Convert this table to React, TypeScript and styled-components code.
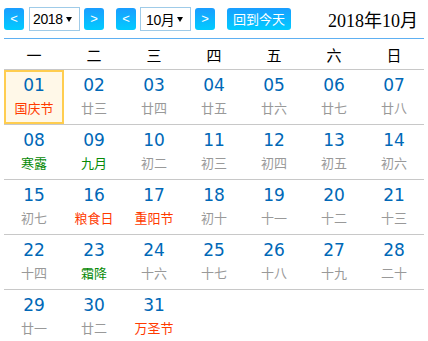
import React from "react";
import styled, { createGlobalStyle } from "styled-components";

const Global = createGlobalStyle`
  html, body { margin: 0; padding: 0; background: #fff; }
  body { font-family: "Liberation Sans", "Noto Sans CJK SC", sans-serif; }
`;

const Wrap = styled.div`
  width: 420px;
  margin-left: 4px;
`;

const Toolbar = styled.div`
  height: 38px;
  display: flex;
  align-items: center;
  border-bottom: 1px solid #5eb0f2;
`;

const NavButton = styled.button<{ $gapRight?: number }>`
  width: 20px;
  height: 22px;
  padding: 0;
  margin: 0 ${(p) => p.$gapRight ?? 4}px 0 0;
  border: none;
  border-radius: 3px;
  background: linear-gradient(to bottom, #1a9dff, #00ccff);
  color: #fff;
  font: 13px "Liberation Sans", sans-serif;
  line-height: 22px;
  display: flex;
  align-items: center;
  justify-content: center;
`;

const SelectBox = styled.div<{ $w: number; $padLeft: number }>`
  box-sizing: border-box;
  width: ${(p) => p.$w}px;
  height: 24px;
  margin-right: 4px;
  border: 1px solid #9fcbe8;
  background: #fff;
  display: flex;
  align-items: center;
  justify-content: space-between;
  padding: 0 7px 0 ${(p) => p.$padLeft}px;
  font: 14px "Liberation Sans", "Noto Sans CJK SC", sans-serif;
  letter-spacing: -0.4px;
  color: #000;
`;

const Caret = styled.span`
  width: 0;
  height: 0;
  border-left: 3px solid transparent;
  border-right: 3px solid transparent;
  border-top: 5px solid #000;
`;

const Spacer = styled.span<{ $w: number }>`
  display: inline-block;
  width: ${(p) => p.$w}px;
`;

const TodayButton = styled.button`
  width: 64px;
  height: 22px;
  padding: 0;
  border: none;
  border-radius: 3px;
  background: linear-gradient(to bottom, #1a9dff, #00ccff);
  color: #fff;
  font: 13px "Noto Sans CJK SC", sans-serif;
  line-height: 22px;
`;

const Title = styled.div`
  margin-left: auto;
  padding-right: 6px;
  font: 18px "Liberation Serif", "Noto Sans CJK SC", serif;
  color: #000;
`;

const WeekHead = styled.div`
  display: grid;
  grid-template-columns: repeat(7, 60px);
  height: 30px;
  border-bottom: 1px solid #c8c8c8;
`;

const WeekDay = styled.div`
  display: flex;
  align-items: center;
  justify-content: center;
  font: 15px "Noto Sans CJK SC", sans-serif;
  color: #000;
`;

const WeekRow = styled.div<{ $last?: boolean }>`
  display: grid;
  grid-template-columns: repeat(7, 60px);
  height: 54px;
  border-bottom: ${(p) => (p.$last ? "none" : "1px solid #c8c8c8")};
`;

const Cell = styled.div<{ $selected?: boolean }>`
  box-sizing: border-box;
  height: 54px;
  display: flex;
  flex-direction: column;
  align-items: center;
  border: 2px solid ${(p) => (p.$selected ? "#ffcd4f" : "transparent")};
  background: ${(p) => (p.$selected ? "#fff8e8" : "transparent")};
  padding-top: 2px;
`;

const DayNum = styled.div`
  font: 17px "DejaVu Sans", sans-serif;
  color: #0068b7;
  line-height: 22px;
`;

type Kind = "normal" | "holiday" | "term";

const Lunar = styled.div<{ $kind: Kind }>`
  margin-top: 2px;
  font: 13px "Noto Sans CJK SC", sans-serif;
  line-height: 20px;
  color: ${(p) =>
    p.$kind === "holiday" ? "#ff3a00" : p.$kind === "term" ? "#078a07" : "#999"};
`;

const days: [string, string, Kind][] = [
  ["01", "国庆节", "holiday"],
  ["02", "廿三", "normal"],
  ["03", "廿四", "normal"],
  ["04", "廿五", "normal"],
  ["05", "廿六", "normal"],
  ["06", "廿七", "normal"],
  ["07", "廿八", "normal"],
  ["08", "寒露", "term"],
  ["09", "九月", "term"],
  ["10", "初二", "normal"],
  ["11", "初三", "normal"],
  ["12", "初四", "normal"],
  ["13", "初五", "normal"],
  ["14", "初六", "normal"],
  ["15", "初七", "normal"],
  ["16", "粮食日", "holiday"],
  ["17", "重阳节", "holiday"],
  ["18", "初十", "normal"],
  ["19", "十一", "normal"],
  ["20", "十二", "normal"],
  ["21", "十三", "normal"],
  ["22", "十四", "normal"],
  ["23", "霜降", "term"],
  ["24", "十六", "normal"],
  ["25", "十七", "normal"],
  ["26", "十八", "normal"],
  ["27", "十九", "normal"],
  ["28", "二十", "normal"],
  ["29", "廿一", "normal"],
  ["30", "廿二", "normal"],
  ["31", "万圣节", "holiday"],
];

const weekNames = ["一", "二", "三", "四", "五", "六", "日"];

export default function App() {
  const rows: [string, string, Kind][][] = [];
  for (let i = 0; i < days.length; i += 7) rows.push(days.slice(i, i + 7));
  return (
    <Wrap>
      <Global />
      <Toolbar>
        <NavButton $gapRight={5}>&lt;</NavButton>
        <SelectBox $w={51} $padLeft={3}>
          2018
          <Caret />
        </SelectBox>
        <NavButton $gapRight={0}>&gt;</NavButton>
        <Spacer $w={12} />
        <NavButton>&lt;</NavButton>
        <SelectBox $w={51} $padLeft={5}>
          10月
          <Caret />
        </SelectBox>
        <NavButton $gapRight={0}>&gt;</NavButton>
        <Spacer $w={12} />
        <TodayButton>回到今天</TodayButton>
        <Title>2018年10月</Title>
      </Toolbar>
      <WeekHead>
        {weekNames.map((w) => (
          <WeekDay key={w}>{w}</WeekDay>
        ))}
      </WeekHead>
      {rows.map((row, ri) => (
        <WeekRow key={ri} $last={ri === rows.length - 1}>
          {row.map(([d, l, k]) => (
            <Cell key={d} $selected={d === "01"}>
              <DayNum>{d}</DayNum>
              <Lunar $kind={k}>{l}</Lunar>
            </Cell>
          ))}
        </WeekRow>
      ))}
    </Wrap>
  );
}
